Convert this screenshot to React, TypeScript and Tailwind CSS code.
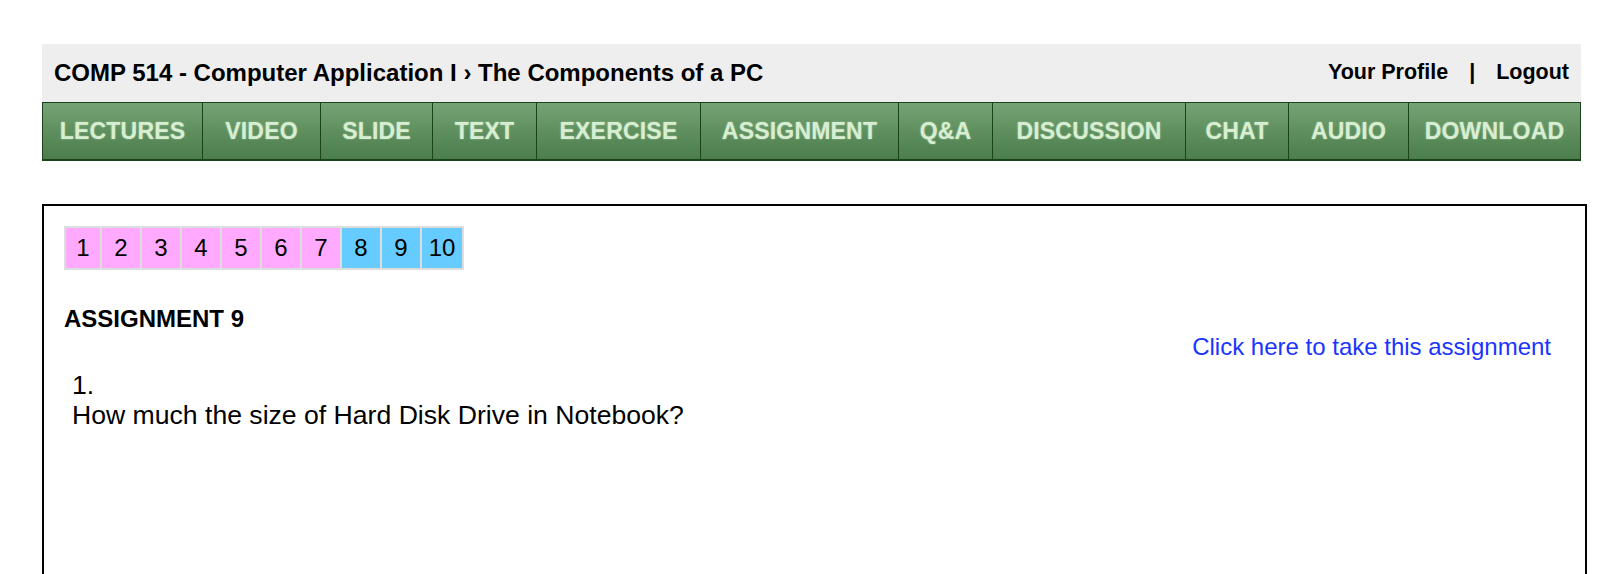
import React from "react";

const tabs: { label: string; w: string }[] = [
  { label: "LECTURES", w: "w-[161px]" },
  { label: "VIDEO", w: "w-[118px]" },
  { label: "SLIDE", w: "w-[112px]" },
  { label: "TEXT", w: "w-[104px]" },
  { label: "EXERCISE", w: "w-[164px]" },
  { label: "ASSIGNMENT", w: "w-[198px]" },
  { label: "Q&A", w: "w-[94px]" },
  { label: "DISCUSSION", w: "w-[193px]" },
  { label: "CHAT", w: "w-[103px]" },
  { label: "AUDIO", w: "w-[120px]" },
  { label: "DOWNLOAD", w: "w-[172px]" },
];

const pages: { n: number; w: string; bg: string }[] = [
  { n: 1, w: "w-[34px]", bg: "bg-[#ffaaff]" },
  { n: 2, w: "w-[38px]", bg: "bg-[#ffaaff]" },
  { n: 3, w: "w-[38px]", bg: "bg-[#ffaaff]" },
  { n: 4, w: "w-[38px]", bg: "bg-[#ffaaff]" },
  { n: 5, w: "w-[38px]", bg: "bg-[#ffaaff]" },
  { n: 6, w: "w-[38px]", bg: "bg-[#ffaaff]" },
  { n: 7, w: "w-[38px]", bg: "bg-[#ffaaff]" },
  { n: 8, w: "w-[38px]", bg: "bg-[#66ccff]" },
  { n: 9, w: "w-[38px]", bg: "bg-[#66ccff]" },
  { n: 10, w: "w-[40px]", bg: "bg-[#66ccff]" },
];

export default function App() {
  return (
    <div className="min-h-screen bg-white pl-[42px] pt-[44px] font-['Liberation_Sans',Arial,sans-serif] text-black">
      <div className="flex h-[58px] w-[1539px] items-center justify-between bg-[#eeeeee] pl-[12px] pr-[12px]">
        <div className="text-[24px] font-bold leading-none">
          COMP 514 - Computer Application I › The Components of a PC
        </div>
        <div className="flex items-center text-[21.5px] font-bold leading-none">
          <span>Your Profile</span>
          <span className="mx-[21px]">|</span>
          <span>Logout</span>
        </div>
      </div>

      <div className="flex h-[59px] w-[1539px]">
        {tabs.map((t, i) => (
          <div
            key={t.label}
            className={`${t.w} ${i === 0 ? "border-l" : ""} flex h-full shrink-0 items-center justify-center border-r border-t border-b-2 border-[#1b431b] bg-gradient-to-b from-[#76a376] via-[#5f8f5f] to-[#4c7d4c] text-[23px] font-bold leading-none tracking-[0.2px] text-[#d8eed2] [text-shadow:0_0_2px_rgba(215,255,210,0.5)]`}
          >
            {t.label}
          </div>
        ))}
      </div>

      <div className="mt-[43px] h-[420px] w-[1545px] border-2 border-black p-[20px]">
        <div className="flex w-fit gap-[2px] bg-[#dddddd] p-[2px]">
          {pages.map((p) => (
            <div
              key={p.n}
              className={`${p.w} ${p.bg} flex h-[40px] items-center justify-center text-[24px] leading-none`}
            >
              {p.n}
            </div>
          ))}
        </div>

        <div className="mt-[35px] text-[24px] font-bold leading-[28px]">ASSIGNMENT 9</div>

        <div className="flex justify-end pr-[14px] text-[24px] leading-[28px]">
          <span className="text-[#1a35ff]">Click here to take this assignment</span>
        </div>

        <div className="mt-[9px] pl-[8px] text-[26.6px] leading-[30px]">
          <div>1.</div>
          <div>How much the size of Hard Disk Drive in Notebook?</div>
        </div>
      </div>
    </div>
  );
}
